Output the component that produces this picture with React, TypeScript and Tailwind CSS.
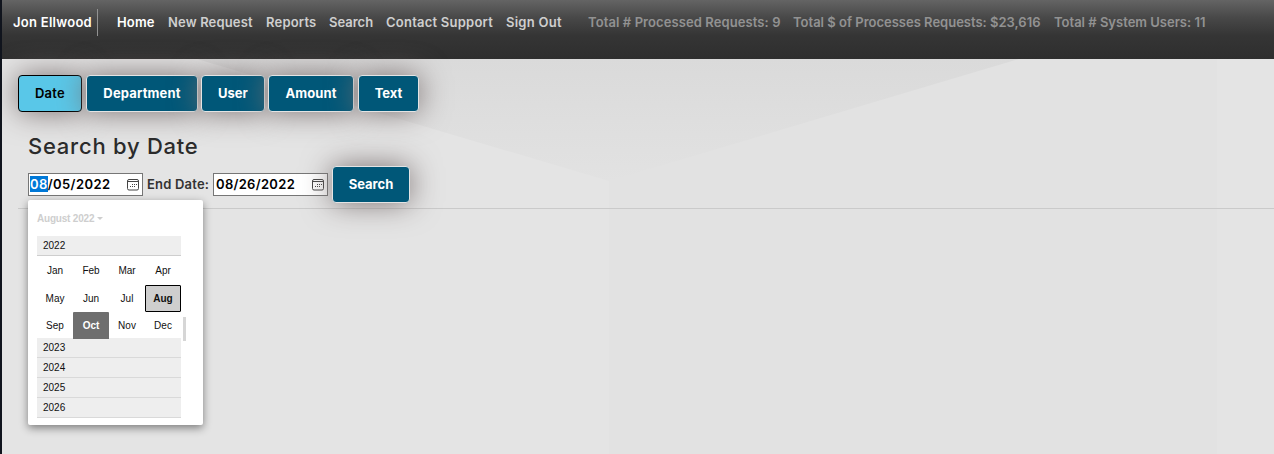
import React from "react";

const nav = [
  { t: "New Request", w: "w-[85px] mr-[13px] tracking-[0.15px]" },
  { t: "Reports", w: "w-[51px] mr-[12px] tracking-[0.2px]" },
  { t: "Search", w: "w-[44px] mr-[13px]" },
  { t: "Contact Support", w: "w-[107px] mr-[13px] tracking-[0.23px]" },
  { t: "Sign Out", w: "w-[56px] mr-[26px] tracking-[0.25px]" },
];
const stats = [
  { t: "Total # Processed Requests: 9", w: "w-[193px] mr-[12px] tracking-[0.09px]" },
  { t: "Total $ of Processes Requests: $23,616", w: "w-[248px] mr-[13px]" },
  { t: "Total # System Users: 11", w: "w-[152px]" },
];
const tabs = [
  { t: "Department", w: "ml-1 w-[112px] tracking-[0.15px]" },
  { t: "User", w: "ml-[3px] w-[64px]" },
  { t: "Amount", w: "ml-[3px] w-[86px] tracking-[0.1px]" },
  { t: "Text", w: "ml-1 w-[61px]" },
];
const months = ["Jan", "Feb", "Mar", "Apr", "May", "Jun", "Jul", "Aug", "Sep", "Oct", "Nov", "Dec"];

function CalendarIcon() {
  return (
    <svg width="12" height="12" viewBox="0 0 12 12" fill="none" stroke="#444" className="shrink-0">
      <rect x="0.5" y="0.5" width="11" height="10.5" rx="1.5" />
      <path d="M1 2.5H11" />
      <path d="M5 5.5h1M7 5.5h1M9 5.5h1M3 7.5h1M5 7.5h1M7 7.5h1" />
    </svg>
  );
}

export default function App() {
  return (
    <div className="relative h-[454px] w-[1274px] overflow-hidden border-l-2 border-[#10141d] bg-[#e4e4e4] font-['Inter',sans-serif]">
      <svg className="absolute left-0 top-[59px]" width="1272" height="395" viewBox="2 59 1272 395">
        <defs>
          <linearGradient id="fade" x1="0" y1="0" x2="0" y2="1">
            <stop offset="0" stopColor="#dadada" />
            <stop offset="1" stopColor="#e2e2e2" />
          </linearGradient>
        </defs>
        <rect x="609" y="59" width="608" height="395" fill="#e2e2e2" />
        <path d="M197 59H1019L609 181Z" fill="url(#fade)" />
      </svg>
      <header className="relative h-[59px] bg-[linear-gradient(#646464_0%,#484848_30%,#353535_60%,#2e2e2e_100%)] pl-[11px] pt-[9px] text-[13px] font-semibold text-[#cfcfcf]">
        <div className="flex h-[27px] items-center whitespace-nowrap">
          <div className="flex h-[27px] w-[85px] items-center border-r border-[#929292] tracking-[0.27px] text-white">Jon Ellwood</div>
          <div className="ml-[19px] mr-[13px] w-[38px] tracking-[0.15px] text-white">Home</div>
          {nav.map((n) => <div key={n.t} className={n.w}>{n.t}</div>)}
          {stats.map((n) => <div key={n.t} className={`${n.w} text-[#929292]`}>{n.t}</div>)}
        </div>
      </header>
      <main className="relative pl-4 pt-4">
        <div className="flex text-[13px] font-bold text-white">
          <button className="h-[37px] w-[64px] rounded-[4px] border border-black bg-[#59c7e8] font-semibold tracking-[0.3px] text-black shadow-[0_0_30px_#7a7070]">Date</button>
          {tabs.map((b) => (
            <button key={b.t} className={`${b.w} h-[37px] rounded-[4px] border border-[#e4e4e4] bg-[#005778] shadow-[0_0_30px_#7a7070]`}>{b.t}</button>
          ))}
        </div>
        <h1 className="ml-[10px] mt-[20px] h-[28px] text-[22px] font-medium leading-[28px] tracking-[0.75px] text-[#2b2b2b]">Search by Date</h1>
        <div className="ml-[10px] mt-[6px] flex h-[37px] items-center text-[13px] font-semibold">
          <div className="flex h-[23px] w-[115px] items-center justify-between border border-[#767676] bg-white pl-px pr-[3px] tracking-[0.4px]">
            <span><span className="bg-[#0078d7] text-white">08</span>/05/2022</span><CalendarIcon />
          </div>
          <span className="ml-1 w-[66px] whitespace-nowrap tracking-[0.2px] text-[#333]">End Date:</span>
          <div className="flex h-[23px] w-[115px] items-center justify-between border border-[#767676] bg-white pl-[2px] pr-[3px] tracking-[0.3px]">
            <span>08/26/2022</span><CalendarIcon />
          </div>
          <button className="ml-1 h-[37px] w-[78px] rounded-[4px] border border-[#e4e4e4] bg-[#005778] font-bold text-white shadow-[0_0_30px_#7a7070]">Search</button>
        </div>
        <hr className="mt-[5px] border-[#cacaca]" />
      </main>
      <div className="absolute left-[26px] top-[200px] h-[225px] w-[175px] rounded-[2px] bg-white pl-[9px] pt-[11px] font-['Liberation_Sans',sans-serif] text-[10px] text-[#101010] shadow-[0_3px_9px_rgba(0,0,0,0.45)]">
        <div className="flex h-[14px] items-center gap-[3px] font-bold tracking-[-0.2px] text-[#cecece]">August 2022
          <svg width="6" height="3" viewBox="0 0 6 3" fill="#cecece"><path d="M0 0h6L3 3z" /></svg>
        </div>
        <div className="mt-[11px] flex h-[20px] w-[144px] items-center border-b border-[#cecece] bg-[#eee] pl-[6px]">2022</div>
        <div className="mt-px grid w-[144px] grid-cols-4 grid-rows-[28px_27px_27px]">
          {months.map((m) => (
            <div key={m} className={`flex items-center justify-center ${m === "Aug" ? "rounded-[1px] border border-black bg-[#cecece] font-bold" : m === "Oct" ? "rounded-t-[1px] bg-[#6e6e6e] font-bold text-white" : ["Jan", "Feb", "Mar", "Apr"].includes(m) ? "pb-[2px]" : ""}`}>{m}</div>
          ))}
        </div>
        <div className="-mt-px">
          {["2023", "2024", "2025", "2026"].map((y) => (
            <div key={y} className="flex h-[20px] w-[144px] items-center border-b border-[#d9d9d9] bg-[#eee] pl-[6px]">{y}</div>
          ))}
        </div>
        <div className="absolute left-[155px] top-[117px] h-[24px] w-[3px] bg-[#d6d6d6]" />
      </div>
    </div>
  );
}
